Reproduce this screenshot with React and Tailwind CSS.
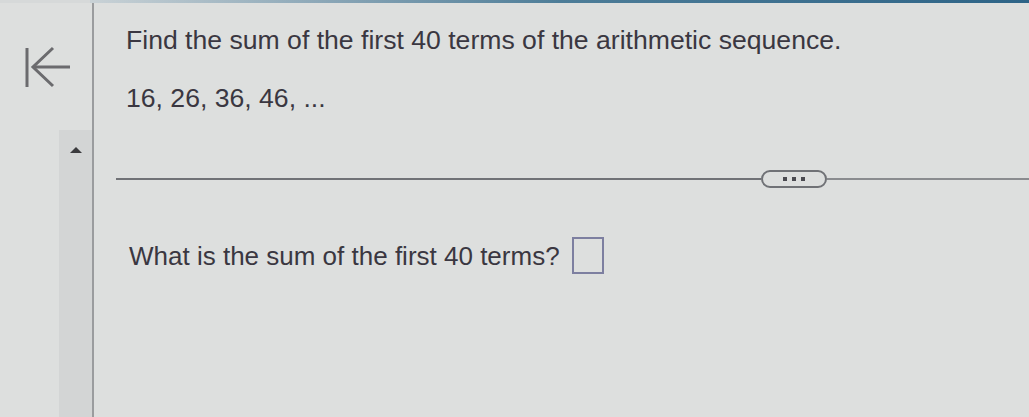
export default function App() {
  return (
    <div className="w-[1029px] h-[417px] overflow-hidden bg-[#dddfde] flex flex-col" style={{ fontFamily: '"Liberation Sans", Arial, sans-serif' }}>
      <div className="h-[3px] flex shrink-0">
        <div className="w-[90px] bg-[#d6d9d9]" />
        <div className="flex-1 bg-gradient-to-r from-[#c9d2d6] via-[#4d7d98] to-[#2d6487]" />
      </div>
      <div className="flex flex-1 min-h-0">
        <div className="w-[94px] shrink-0 border-r-2 border-[#9a9c9e] flex flex-col">
          <div className="h-[127px] pl-[22px] pt-[42px]">
            <svg width="50" height="46" viewBox="0 0 50 46" fill="none" stroke="#6b6b6e" strokeWidth="3" strokeLinecap="butt">
              <line x1="5" y1="3" x2="5" y2="42" />
              <line x1="11" y1="22" x2="48" y2="22" />
              <polyline points="31,3 11,22 31,41" />
            </svg>
          </div>
          <div className="flex-1 flex justify-end">
            <div className="w-[33px] bg-[#d3d5d5] flex justify-center pt-[17px]">
              <div className="w-0 h-0 border-l-[6px] border-r-[6px] border-b-[6px] border-l-transparent border-r-transparent border-b-[#3b3b3e]" />
            </div>
          </div>
        </div>
        <div className="flex-1 flex flex-col">
          <div className="pl-[32px] pt-[22px] text-[#3a3741]">
            <p className="text-[26.6px] leading-[30px]">Find the sum of the first 40 terms of the arithmetic sequence.</p>
            <p className="text-[26.6px] leading-[30px] mt-[28px]">16, 26, 36, 46, ...</p>
          </div>
          <div className="mt-[57px] pl-[22px] flex items-center">
            <div className="w-[645px] h-[2px] bg-[#707276]" />
            <div className="w-[66px] h-[18px] rounded-full border-2 border-[#707276] flex items-center justify-center gap-[5px]">
              <span className="w-[4px] h-[4px] bg-[#4a4a50]" />
              <span className="w-[4px] h-[4px] bg-[#4a4a50]" />
              <span className="w-[4px] h-[4px] bg-[#4a4a50]" />
            </div>
            <div className="flex-1 h-[2px] bg-[#8a8c8f]" />
          </div>
          <div className="mt-[49px] pl-[35px] flex items-center gap-[12px] text-[#3a3741]">
            <p className="text-[26px] leading-[30px]">What is the sum of the first 40 terms?</p>
            <div className="w-[32px] h-[37px] border-2 border-[#7d7fa0]" />
          </div>
        </div>
      </div>
    </div>
  );
}
